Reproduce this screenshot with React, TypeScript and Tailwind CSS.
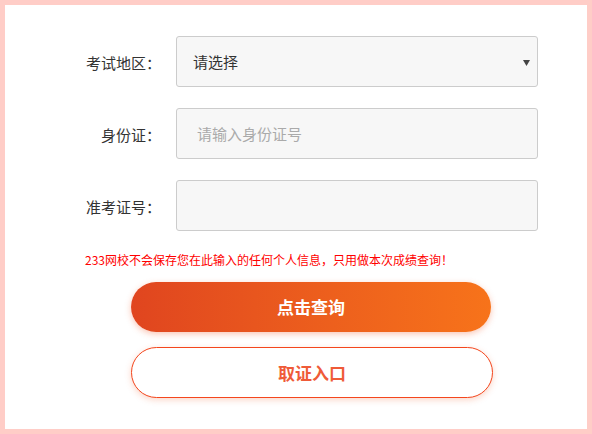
import React from "react";

const font = { fontFamily: '"Microsoft YaHei", "Noto Sans CJK SC", "Noto Sans", sans-serif' };

function Row({ label, children }: { label: string; children: React.ReactNode }) {
  return (
    <div className="flex items-center">
      <div className="w-[156px] text-right text-[15px] leading-[20px] text-[#333] pt-[3px]">{label}</div>
      <div className="ml-[15px]">{children}</div>
    </div>
  );
}

export default function App() {
  return (
    <div
      style={font}
      className="w-[592px] h-[434px] border-[5px] border-[#ffcdc7] bg-white box-border flex flex-col pt-[31px]"
    >
      <div className="flex flex-col gap-[21px]">
        <Row label="考试地区：">
          <div className="relative w-[362px] h-[51px] rounded-[3px] border border-[#cccccc] bg-[#f7f7f7] flex items-center pl-[16px] text-[15px] text-[#333]">
            <span className="pt-[2px]">请选择</span>
            <svg className="absolute right-[7px] top-[23px]" width="7" height="6" viewBox="0 0 7 6">
              <path d="M0 0 H7 L3.5 6 Z" fill="#444" />
            </svg>
          </div>
        </Row>
        <Row label="身份证：">
          <input
            placeholder="请输入身份证号"
            style={font}
            className="w-[362px] h-[51px] rounded-[3px] border border-[#cccccc] bg-[#f7f7f7] pl-[20px] text-[15px] text-[#333] placeholder:text-[#aaaaaa] outline-none"
          />
        </Row>
        <Row label="准考证号：">
          <input
            style={font}
            className="w-[362px] h-[51px] rounded-[3px] border border-[#cccccc] bg-[#f7f7f7] pl-[20px] text-[15px] text-[#333] outline-none"
          />
        </Row>
      </div>
      <div className="ml-[80px] mt-[20px] text-[12px] leading-[18px] text-[#ff0000] whitespace-nowrap">
        233网校不会保存您在此输入的任何个人信息，只用做本次成绩查询！
      </div>
      <button
        style={font}
        className="ml-[126px] mt-[13px] w-[360px] h-[50px] rounded-full bg-gradient-to-r from-[#e0451f] to-[#f7731a] text-white font-bold text-[17px] shadow-[0_2px_6px_rgba(240,90,40,0.35)] flex items-center justify-center"
      >
        点击查询
      </button>
      <button
        style={font}
        className="ml-[126px] mt-[15px] w-[362px] h-[51px] rounded-full bg-white border border-[#f4461d] text-[#ef5b38] font-bold text-[17px] shadow-[0_2px_6px_rgba(240,90,40,0.25)] flex items-center justify-center"
      >
        取证入口
      </button>
    </div>
  );
}
